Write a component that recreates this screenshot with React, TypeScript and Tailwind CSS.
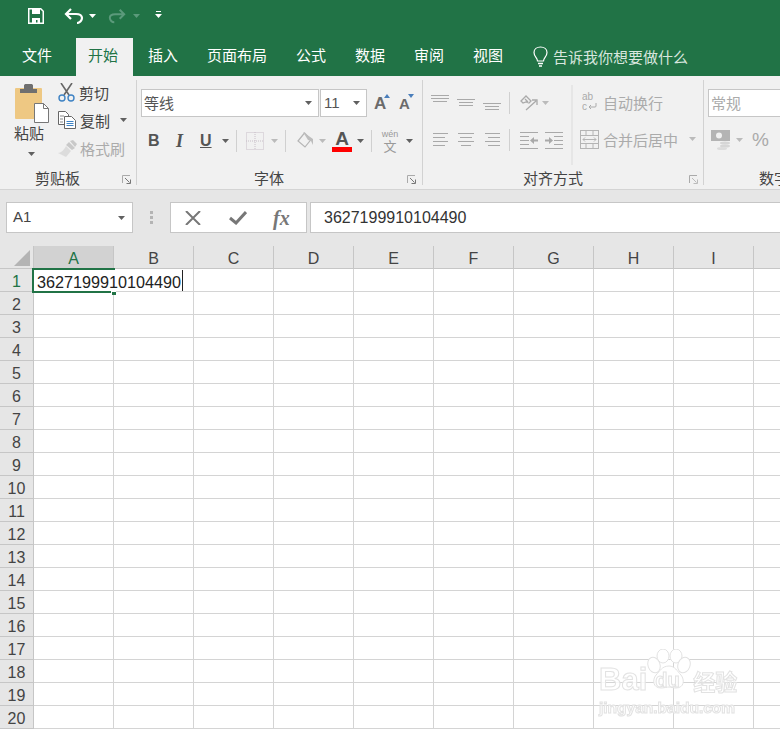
const cjk = "font-['Noto_Sans_CJK_SC',sans-serif]";
const COLS = ['A', 'B', 'C', 'D', 'E', 'F', 'G', 'H', 'I', ''];
const ROWS = Array.from({ length: 20 }, (_, i) => i + 1);

function Caret({ color = '#606060', className = '' }: { color?: string; className?: string }) {
  return (
    <svg width="7" height="4" viewBox="0 0 7 4" className={className}>
      <path d="M0 0h7L3.500 4z" fill={color} />
    </svg>
  );
}

function Sep({ className = '' }: { className?: string }) {
  return <div className={`w-px h-[22px] bg-[#d0d0d0] ${className}`} />;
}

function Launcher({ color = '#777' }: { color?: string }) {
  return (
    <svg width="9" height="9" viewBox="0 0 9 9" fill="none" stroke={color}>
      <path d="M.5 8V.5H8" stroke="#aaa" />
      <path d="M3 3l4.500 4.500M8.500 4.500v4h-4" />
    </svg>
  );
}

// stacked lines used by every alignment button, x/width per line
function Lines({ lines, w = 18, h = 18 }: { lines: [number, number, number][]; w?: number; h?: number }) {
  return (
    <svg width={w} height={h} viewBox={`0 0 ${w} ${h}`}>
      {lines.map(([x, y, len], i) => (
        <rect key={i} x={x} y={y} width={len} height="1" fill="#a9a9a9" />
      ))}
    </svg>
  );
}

function Combo({ text, width, font, textClass = 'text-[#555]' }: { text: string; width: string; font: string; textClass?: string }) {
  return (
    <div className={`${width} h-[28px] bg-white border border-[#c6c6c6] flex items-center pl-[2px] pr-[6px] justify-between shrink-0`}>
      <span className={`${font} ${textClass} text-[15px]`}>{text}</span>
      <Caret />
    </div>
  );
}

function GroupLabel({ text, pad, launcherGap = 'mr-[5px]', faded }: { text: string; pad: string; launcherGap?: string; faded?: boolean }) {
  return (
    <div className={`mt-auto h-[20px] shrink-0 flex items-center ${pad} pt-[4px]`}>
      <span className={`${cjk} text-[15px] leading-none text-[#444]`}>{text}</span>
      <div className={`ml-auto ${launcherGap} mt-[4px]`}>
        <Launcher color={faded ? '#bbb' : '#777'} />
      </div>
    </div>
  );
}

function PasteIcon() {
  return (
    <svg width="35" height="39" viewBox="0 0 35 39">
      <rect x="0" y="4" width="27" height="31" rx="1" fill="#eec883" />
      <path d="M5 9V5h4V1.500C9 .5 10 0 11 0h5c1 0 2 .5 2 1.500V5h4v4z" fill="#6f6f6f" />
      <path d="M19.500 19.500h9l5 5v14h-14z" fill="#fff" stroke="#777" />
      <path d="M28.500 19.500v5h5" fill="none" stroke="#777" />
    </svg>
  );
}

function ScissorsIcon() {
  return (
    <svg width="17" height="19" viewBox="0 0 17 19" fill="none">
      <path d="M3 0l8 12M14 0L6 12" stroke="#666" strokeWidth="1.600" />
      <circle cx="4" cy="15" r="3" stroke="#3f83c4" strokeWidth="1.400" />
      <circle cx="13" cy="15" r="3" stroke="#3f83c4" strokeWidth="1.400" />
    </svg>
  );
}

function CopyIcon() {
  return (
    <svg width="18" height="18" viewBox="0 0 18 18" fill="none">
      <path d="M.5.500h7l3 3v10h-10z" fill="#fff" stroke="#666" />
      <path d="M6.500 5.500h7l4 4v8h-11z" fill="#fff" stroke="#666" />
      <path d="M2 5h4M2 8h3M2 11h3" stroke="#888" />
      <path d="M8.500 10.500h7M8.500 12.500h7M8.500 14.500h7" stroke="#3f83c4" />
    </svg>
  );
}

function BrushIcon() {
  return (
    <svg width="19" height="17" viewBox="0 0 19 17">
      <path d="M12 1l3-1 4 4-2 3zM11 2l6 6-3 2-6-5z" fill="#c9c9c9" />
      <path d="M8 6l5 5-5 6-8-4c3 0 6-3 8-7z" fill="#dcdcdc" />
    </svg>
  );
}

function FontSizeA({ up }: { up?: boolean }) {
  return (
    <div className="flex w-[17px] h-[20px] items-end">
      <span className={`font-['Liberation_Sans',sans-serif] font-bold leading-[18px] text-[#6b6b6b] ${up ? 'text-[17px]' : 'text-[15px]'}`}>A</span>
      <svg width="6" height="4" viewBox="0 0 6 4" className="self-start mt-[1px] -ml-[2px]">
        <path d={up ? 'M0 4l3-4 3 4z' : 'M0 0h6L3 4z'} fill="#4a7ebb" />
      </svg>
    </div>
  );
}

function FillIcon() {
  return (
    <svg width="18" height="18" viewBox="0 0 18 18" fill="none">
      <path d="M7.500 1L14 7.500 8 15 1 9z" stroke="#b5b5b5" strokeWidth="1.200" />
      <path d="M6 0l10 7v6l-2-4-3-1z" fill="#bdbdbd" />
    </svg>
  );
}

function BorderIcon() {
  return (
    <svg width="18" height="18" viewBox="0 0 18 18" fill="none" stroke="#c8bfc8" strokeDasharray="1 1">
      <rect x=".5" y=".5" width="17" height="17" />
      <path d="M9 0v18M0 9h18" />
    </svg>
  );
}

function OrientIcon() {
  return (
    <svg width="18" height="17" viewBox="0 0 18 17" fill="none" stroke="#aaa" strokeWidth="1.300">
      <path d="M1 6l5-5 5 5-2 2-3-1-3 1zM5 4l3 3" />
      <path d="M6 15L16 6M12 5h5v5" />
    </svg>
  );
}

function IndentIcon({ flip }: { flip?: boolean }) {
  return (
    <svg width="18" height="17" viewBox="0 0 18 17" className={flip ? '-scale-x-100' : ''}>
      {[0, 4, 8, 12, 16].map((y) => (
        <rect key={y} x={y === 0 || y === 16 ? 0 : 9} y={y} width={y === 0 || y === 16 ? 18 : 9} height="1" fill="#a9a9a9" />
      ))}
      <path d="M0 7.500h4V5l4 3.500L4 12V9.500H0z" fill="#a9a9a9" />
    </svg>
  );
}

function MergeIcon() {
  return (
    <svg width="19" height="19" viewBox="0 0 19 19" fill="none" stroke="#b4b4b4">
      <rect x=".5" y=".5" width="18" height="18" />
      <path d="M0 5.500h19M0 13.500h19M6 .5v5M13 .5v5M6 13.500v5M13 13.500v5" />
      <path d="M3 9.500h13M5 7.500l-2 2 2 2M14 7.500l2 2-2 2" />
    </svg>
  );
}

function WrapIcon() {
  return (
    <div className="w-[16px] h-[20px] flex flex-col font-['Liberation_Sans',sans-serif] text-[10px] leading-[10px] text-[#aaa]">
      <span>ab</span>
      <div className="flex items-center">
        <span>c</span>
        <svg width="9" height="8" viewBox="0 0 9 8" fill="none" stroke="#aaa" className="ml-[1px]">
          <path d="M8 0v3a1 1 0 0 1-1 1H1M3 2L1 4l2 2" />
        </svg>
      </div>
    </div>
  );
}

function MoneyIcon() {
  return (
    <svg width="20" height="20" viewBox="0 0 20 20">
      <rect x="0" y="0" width="19" height="11" fill="#b4b4b4" />
      <circle cx="8" cy="5.500" r="3" fill="#f1f1f1" />
      <ellipse cx="14" cy="13" rx="5" ry="1.500" fill="#d6d6d6" />
      <ellipse cx="14" cy="16" rx="5" ry="1.500" fill="#d6d6d6" />
      <ellipse cx="11" cy="18.500" rx="5" ry="1.500" fill="#dcdcdc" />
    </svg>
  );
}

function Ribbon() {
  const label = `${cjk} text-[15px] leading-none`;
  return (
    <div className="h-[114px] bg-[#f1f1f1] border-b border-[#d4d4d4] pt-[4px] flex shrink-0 overflow-hidden">
      {/* clipboard */}
      <div className="w-[137px] h-[105px] border-r border-[#d2d2d2] flex flex-col shrink-0">
        <div className="flex">
          <div className="w-[58px] pl-[15px] pt-[4px] flex flex-col">
            <PasteIcon />
            <span className={`${label} text-[#444] -ml-[1px] mt-[2px]`}>粘贴</span>
            <Caret className="ml-[13px] mt-[12px]" />
          </div>
          <div className="flex flex-col text-[#444] -mt-[2px]">
            <div className="h-[28px] flex items-center gap-[4px]">
              <ScissorsIcon />
              <span className={label}>剪切</span>
            </div>
            <div className="h-[28px] flex items-center gap-[4px]">
              <CopyIcon />
              <span className={label}>复制</span>
              <Caret className="ml-[6px]" />
            </div>
            <div className="h-[28px] flex items-center gap-[3px] text-[#ababab]">
              <BrushIcon />
              <span className={label}>格式刷</span>
            </div>
          </div>
        </div>
        <GroupLabel text="剪贴板" pad="pl-[35px]" launcherGap="mr-[5px]" />
      </div>

      {/* font */}
      <div className="w-[286px] h-[105px] border-r border-[#d2d2d2] flex flex-col shrink-0">
        <div className="flex items-center mt-[9px] pl-[4px]">
          <Combo text="等线" width="w-[178px]" font={cjk} />
          <Combo text="11" width="w-[47px] ml-[1px] pl-[3px]" font="font-['Liberation_Sans',sans-serif]" />
          <div className="ml-[7px]"><FontSizeA up /></div>
          <div className="ml-[8px]"><FontSizeA /></div>
        </div>
        <div className="flex items-center h-[26px] mt-[11px] pl-[11px]">
          <span className="w-[27px] font-['Liberation_Sans',sans-serif] font-bold text-[16px] text-[#555]">B</span>
          <span className="w-[25px] font-['Liberation_Serif',serif] font-bold italic text-[18px] text-[#555] pl-[1px]">I</span>
          <span className="w-[16px] font-['Liberation_Sans',sans-serif] font-bold text-[16px] text-[#555] underline">U</span>
          <Caret className="ml-[6px]" />
          <Sep className="ml-[7px]" />
          <div className="ml-[9px]"><BorderIcon /></div>
          <Caret color="#bbb" className="ml-[7px]" />
          <Sep className="ml-[7px]" />
          <div className="ml-[11px]"><FillIcon /></div>
          <Caret color="#bbb" className="ml-[4px]" />
          <div className="ml-[6px] w-[20px] flex flex-col items-center">
            <span className="font-['Liberation_Sans',sans-serif] font-bold text-[19px] leading-[17px] text-[#555]">A</span>
            <div className="w-[20px] h-[5px] bg-[#ff0000]" />
          </div>
          <Caret className="ml-[5px]" />
          <Sep className="ml-[7px]" />
          <div className="ml-[9px] w-[18px] flex flex-col items-center text-[#999] leading-none">
            <span className="font-['Liberation_Sans',sans-serif] text-[9px] leading-[9px]">wén</span>
            <span className={`${cjk} text-[13px] leading-[14px]`}>文</span>
          </div>
          <Caret className="ml-[7px]" />
        </div>
        <GroupLabel text="字体" pad="pl-[117px]" launcherGap="mr-[6px]" />
      </div>

      {/* alignment */}
      <div className="w-[281px] h-[105px] border-r border-[#d2d2d2] flex flex-col shrink-0">
        <div className="flex h-[85px]">
          <div className="w-[148px] pl-[8px]">
            <div className="flex items-center h-[28px] mt-[9px]">
              <div className="w-[26px]"><Lines lines={[[0, 1, 18], [0, 4, 18], [2, 7, 14]]} /></div>
              <div className="w-[26px]"><Lines lines={[[0, 5, 18], [2, 8, 14], [2, 11, 14]]} /></div>
              <div className="w-[26px]"><Lines lines={[[0, 9, 18], [2, 12, 14], [2, 15, 14]]} /></div>
              <Sep />
              <div className="ml-[10px]"><OrientIcon /></div>
              <Caret color="#bbb" className="ml-[4px]" />
            </div>
            <div className="flex items-center h-[26px] mt-[10px]">
              <div className="w-[26px] pl-[2px]"><Lines w={15} lines={[[0, 2, 15], [0, 6, 12], [0, 10, 15], [0, 14, 12]]} /></div>
              <div className="w-[26px] pl-[1px]"><Lines w={16} lines={[[0, 2, 16], [2, 6, 12], [0, 10, 16], [3, 14, 10]]} /></div>
              <div className="w-[26px] pl-[2px]"><Lines w={15} lines={[[0, 2, 15], [3, 6, 12], [0, 10, 15], [3, 14, 12]]} /></div>
              <Sep />
              <div className="ml-[10px]"><IndentIcon flip /></div>
              <div className="ml-[7px]"><IndentIcon /></div>
            </div>
          </div>
          <div className="w-[2px] h-[80px] mt-[5px] bg-[#e6e6e6]" />
          <div className="flex flex-col text-[#ababab]">
            <div className="flex items-center h-[28px] mt-[8px] pl-[9px] gap-[5px]">
              <WrapIcon />
              <span className={label}>自动换行</span>
            </div>
            <div className="flex items-center h-[26px] mt-[10px] pl-[7px] gap-[4px]">
              <MergeIcon />
              <span className={`${label} whitespace-nowrap`}>合并后居中</span>
              <Caret color="#bbb" className="ml-[7px]" />
            </div>
          </div>
        </div>
        <GroupLabel text="对齐方式" pad="pl-[100px]" launcherGap="mr-[5px]" faded />
      </div>

      {/* number, cut off by the window edge */}
      <div className="flex-1 h-[105px] flex flex-col min-w-0">
        <div className="mt-[9px] ml-[4px] h-[28px] bg-white border border-[#c6c6c6] border-r-0 flex items-center pl-[2px]">
          <span className={`${cjk} text-[15px] text-[#aaa]`}>常规</span>
        </div>
        <div className="flex items-center h-[26px] mt-[10px] pl-[7px]">
          <MoneyIcon />
          <Caret color="#bbb" className="ml-[5px]" />
          <span className="ml-[9px] font-['Liberation_Sans',sans-serif] text-[19px] text-[#aaa]">%</span>
        </div>
        <div className="mt-auto h-[20px] pl-[55px] pt-[4px] flex items-center whitespace-nowrap overflow-visible">
          <span className={`${label} text-[#444]`}>数字</span>
        </div>
      </div>
    </div>
  );
}

function FormulaBar() {
  return (
    <div className="h-[56px] bg-[#e6e6e6] flex items-start pt-[12px] pl-[6px] shrink-0">
      <div className="w-[127px] h-[31px] bg-white border border-[#c6c6c6] flex items-center justify-between pl-[6px] pr-[7px] shrink-0">
        <span className="font-['Liberation_Sans',sans-serif] text-[15px] text-[#444]">A1</span>
        <Caret />
      </div>
      <div className="w-[37px] h-[31px] flex flex-col items-center justify-center gap-[2px] shrink-0">
        <div className="w-[3px] h-[3px] bg-[#b4b4b4]" />
        <div className="w-[3px] h-[3px] bg-[#b4b4b4]" />
        <div className="w-[3px] h-[3px] bg-[#b4b4b4]" />
      </div>
      <div className="w-[137px] h-[31px] bg-white border border-[#c6c6c6] flex items-center pl-[14px] shrink-0">
        <svg width="16" height="14" viewBox="0 0 16 14" fill="none" stroke="#777" strokeWidth="2">
          <path d="M1 0l14 14M15 0L1 14" />
        </svg>
        <svg width="18" height="14" viewBox="0 0 18 14" fill="none" stroke="#777" strokeWidth="3" className="ml-[28px]">
          <path d="M1 7l6 5L17 1" />
        </svg>
        <span className="ml-[26px] font-['Liberation_Serif',serif] font-bold italic text-[20px] text-[#777]">fx</span>
      </div>
      <div className="flex-1 ml-[3px] h-[31px] bg-white border border-[#c6c6c6] border-r-0 flex items-center pl-[13px]">
        <span className="font-['Liberation_Sans',sans-serif] text-[16px] text-[#333]">3627199910104490</span>
      </div>
    </div>
  );
}

function Sheet() {
  return (
    <div className="relative flex-1 font-['Liberation_Sans',sans-serif] text-[16px] overflow-hidden bg-white">
      <div className="flex h-[23px] bg-[#e6e6e6] border-b border-[#c6c6c6]">
        <div className="w-[34px] h-full border-r border-[#c6c6c6] flex items-end justify-end pr-[3px] pb-[2px] shrink-0">
          <div className="w-0 h-0 border-l-[16px] border-l-transparent border-b-[16px] border-b-[#b4b4b4]" />
        </div>
        {COLS.map((c, i) => (
          <div
            key={i}
            className={`w-[80px] shrink-0 border-r border-[#c6c6c6] flex items-center justify-center pt-[3px] ${i === 0 ? 'bg-[#d2d2d2] text-[#217346]' : 'text-[#444]'}`}
          >
            {c}
          </div>
        ))}
      </div>
      {ROWS.map((r) => (
        <div key={r} className="flex h-[23px]">
          <div className={`w-[34px] shrink-0 bg-[#e6e6e6] border-r border-b border-[#c6c6c6] flex items-center justify-center pt-[3px] ${r === 1 ? 'bg-[#d2d2d2] text-[#217346]' : 'text-[#444]'}`}>
            {r}
          </div>
          {COLS.map((c, i) => (
            <div key={i} className="w-[80px] shrink-0 border-r border-b border-[#d4d4d4]" />
          ))}
        </div>
      ))}

      {/* active cell, text runs on over B1 */}
      <div className="absolute left-[32px] top-[22px] w-[83px] h-[25px] border-2 border-r-0 border-[#217346] bg-white flex items-stretch pl-[3px]">
        <span className="whitespace-nowrap text-[16.2px] text-[#222] bg-white pr-[1px] pt-[3px] border-r border-r-[#222] leading-[18px]">3627199910104490</span>
      </div>
      <div className="absolute left-[111px] top-[45px] w-[5px] h-[4px] bg-[#217346] border-l border-t border-white" />

      <Watermark />
    </div>
  );
}

function Watermark() {
  const stroke = '[-webkit-text-stroke:1px_#e2e2e2] text-white/80';
  return (
    <div className="absolute left-[599px] top-[403px] w-[145px] h-[72px] pointer-events-none blur-[0.4px]">
      <div className="flex items-end h-[46px]">
        <span className={`font-['Liberation_Sans',sans-serif] font-bold text-[31px] leading-[30px] ${stroke}`}>Bai</span>
        <div className="relative w-[46px] h-[46px]">
          <svg width="46" height="44" viewBox="0 0 46 44" className="absolute -left-[2px] top-0" fill="#fff" stroke="#e2e2e2" strokeWidth="1">
            <ellipse cx="9" cy="16" rx="6" ry="8" transform="rotate(-20 9 16)" />
            <ellipse cx="18" cy="7" rx="6" ry="7" />
            <ellipse cx="31" cy="7" rx="6" ry="7" />
            <ellipse cx="39" cy="16" rx="6" ry="8" transform="rotate(20 39 16)" />
            <path d="M24 17c6 0 8 5 12 9 4 5 3 13-5 13-3 0-5-1-7-1s-5 1-8 1c-8 0-9-8-5-13 4-4 6-9 13-9z" />
          </svg>
          <span className={`absolute left-[8px] top-[19px] font-['Liberation_Sans',sans-serif] font-bold text-[20px] leading-[24px] ${stroke}`}>du</span>
        </div>
        <span className={`${cjk} font-bold text-[22px] leading-[30px] whitespace-nowrap ${stroke}`}>经验</span>
      </div>
      <div className={`mt-[3px] font-['Liberation_Sans',sans-serif] font-bold text-[15.500px] leading-[20px] whitespace-nowrap ${stroke}`}>jingyan.baidu.com</div>
    </div>
  );
}

function TitleBar() {
  return (
    <div className="h-[38px] flex items-start pt-[8px] pl-[28px] shrink-0">
      <svg width="16" height="16" viewBox="0 0 16 16" fill="none">
        <path d="M.75.75h12l2.500 2.500v12H.75z" stroke="#fff" strokeWidth="1.500" />
        <path d="M4 1v5h8V1z" fill="#fff" />
        <path d="M4 15v-5h8v5h-2.500v-3H8v3z" fill="#fff" />
      </svg>
      <svg width="20" height="16" viewBox="0 0 20 16" fill="none" stroke="#fff" strokeWidth="2.200" className="ml-[20px]">
        <path d="M7 1L2 6l5 5M2 6h10c4 0 6 2 6 4s-2 5-5 5" />
      </svg>
      <Caret color="#fff" className="ml-[5px] mt-[6px]" />
      <svg width="18" height="16" viewBox="0 0 20 16" fill="none" stroke="#5b9a7b" strokeWidth="2.200" className="ml-[12px]">
        <path d="M13 1l5 5-5 5M18 6H8C4 6 2 8 2 10s2 5 5 5" />
      </svg>
      <Caret color="#5b9a7b" className="ml-[7px] mt-[6px]" />
      <svg width="7" height="8" viewBox="0 0 7 8" className="ml-[15px] mt-[3px]">
        <rect x="1" y="0" width="5" height="1" fill="#fff" />
        <path d="M0 3h7L3.500 7z" fill="#fff" />
      </svg>
    </div>
  );
}

function Tabs() {
  const tabs: [string, string][] = [['插入', 'ml-[15px]'], ['页面布局', 'ml-[29px]'], ['公式', 'ml-[29px]'], ['数据', 'ml-[29px]'], ['审阅', 'ml-[29px]'], ['视图', 'ml-[29px]']];
  return (
    <div className={`h-[38px] flex items-center shrink-0 text-white text-[15px] ${cjk}`}>
      <span className="ml-[22px] -mt-[3px]">文件</span>
      <div className="ml-[24px] w-[57px] h-full bg-[#f1f1f1] text-[#217346] flex items-center justify-center pb-[3px] pr-[3px]">开始</div>
      {tabs.map(([t, m]) => (
        <span key={t} className={`${m} -mt-[3px]`}>{t}</span>
      ))}
      <svg width="15" height="21" viewBox="0 0 15 21" fill="none" stroke="#fff" strokeWidth="1.200" className="ml-[30px] -mt-[1px]">
        <path d="M4.500 15c0-3-3.500-4.500-3.500-8.500C1 3 4 1 7.500 1S14 3 14 6.500c0 4-3.500 5.500-3.500 8.500z" />
        <path d="M5 17.500h5M6 20h3" strokeWidth="1.500" />
      </svg>
      <span className="ml-[5px] text-[#d8e6de] whitespace-nowrap">告诉我你想要做什么</span>
    </div>
  );
}

export default function App() {
  return (
    <div className="w-[780px] h-[733px] overflow-hidden flex flex-col">
      <div className="bg-[#217346] shrink-0">
        <TitleBar />
        <Tabs />
      </div>
      <Ribbon />
      <FormulaBar />
      <Sheet />
    </div>
  );
}
